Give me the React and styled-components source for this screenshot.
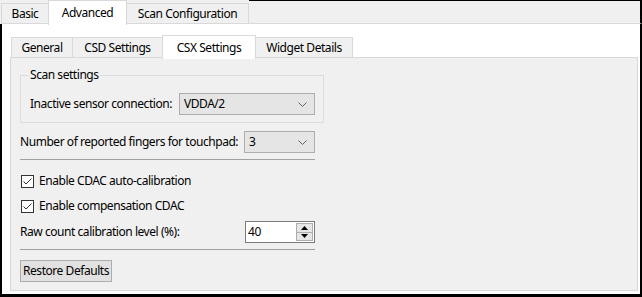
import React from "react";
import styled, { createGlobalStyle } from "styled-components";

const Global = createGlobalStyle`
  html, body { margin: 0; padding: 0; background: #ffffff; }
  body { font-family: "Noto Sans", "Open Sans", sans-serif; font-size: 12px; letter-spacing: -0.45px; color: #000; }
  * { box-sizing: border-box; }
`;

const Window = styled.div`
  width: 642px;
  height: 297px;
  display: flex;
  flex-direction: column;
  background: #f0f0f0;
`;

const TopStrip = styled.div`
  height: 24px;
  display: flex;
  align-items: flex-end;
  background: #f0f0f0;
  padding-left: 1px;
  position: relative;
  z-index: 1;
`;

const Filler = styled.div`
  flex: 1;
  align-self: stretch;
  border-top: 1px solid #000;
  border-right: 2px solid #000;
  border-bottom: 1px solid #d9d9d9;
`;

const Tab = styled.div`
  width: ${(p) => p.$w}px;
  height: ${(p) => (p.$active ? 25 : 21)}px;
  margin-bottom: ${(p) => (p.$active ? -1 : 0)}px;
  display: flex;
  align-items: center;
  justify-content: center;
  background: ${(p) => (p.$active ? "#ffffff" : "#f0f0f0")};
  border: 1px solid #d9d9d9;
  border-bottom: ${(p) => (p.$active ? "none" : "1px solid #d9d9d9")};
  margin-left: -1px;
  white-space: nowrap;
  line-height: 16px;
`;

const OuterPanel = styled.div`
  flex: 1;
  background: #ffffff;
  border-left: 2px solid #000;
  border-right: 2px solid #000;
  border-bottom: 3px solid #000;
  padding: 10px 2px 3px 8px;
  display: flex;
  flex-direction: column;
`;

const InnerStrip = styled.div`
  height: 24px;
  display: flex;
  align-items: flex-end;
  padding-left: 1px;
  position: relative;
  z-index: 1;
`;

const InnerTab = styled(Tab)`
  height: ${(p) => (p.$active ? 24 : 21)}px;
`;

const InnerPanel = styled.div`
  flex: 1;
  margin-top: -1px;
  background: #f0f0f0;
  border: 1px solid #d9d9d9;
  padding: 9px 9px 0 9px;
  display: flex;
  flex-direction: column;
  align-items: flex-start;
`;

const Group = styled.fieldset`
  margin: 0;
  width: 304px;
  border: 1px solid #dcdcdc;
  padding: 0 9px 7px 9px;
  min-width: 0;
`;

const Legend = styled.legend`
  padding: 0 1px;
  margin-left: -1px;
  line-height: 16px;
`;

const Row = styled.div`
  display: flex;
  align-items: center;
  width: ${(p) => p.$w || 295}px;
  margin-top: ${(p) => p.$mt || 0}px;
`;

const Label = styled.span`
  flex: 1;
  white-space: nowrap;
  line-height: 16px;
`;

const Combo = styled.div`
  width: ${(p) => p.$w}px;
  height: 22px;
  background: #e5e5e5;
  border: 1px solid #adadad;
  display: flex;
  align-items: center;
  padding-left: 4px;
  padding-right: 7px;
  line-height: 16px;
`;

const ComboText = styled.span`
  flex: 1;
`;

const Chevron = () => (
  <svg width="9" height="5" viewBox="0 0 9 5">
    <polyline points="0.5,0.5 4.5,4.5 8.5,0.5" fill="none" stroke="#606060" strokeWidth="1" />
  </svg>
);

const Separator = styled.div`
  width: 295px;
  height: 1px;
  background: #a0a0a0;
  margin-top: ${(p) => p.$mt}px;
`;

const CheckRow = styled.label`
  display: flex;
  align-items: center;
  gap: 5px;
  margin-top: ${(p) => p.$mt}px;
  margin-left: 1px;
  line-height: 16px;
`;

const Box = styled.span`
  width: 13px;
  height: 13px;
  border: 1px solid #333333;
  background: #ffffff;
  display: flex;
  align-items: center;
  justify-content: center;
`;

const Check = () => (
  <svg width="11" height="11" viewBox="0 0 11 11">
    <polyline points="1.5,5.5 4,8 9.5,2.5" fill="none" stroke="#333333" strokeWidth="1" />
  </svg>
);

const Spin = styled.div`
  width: 70px;
  height: 22px;
  background: #ffffff;
  border: 1px solid #7a7a7a;
  display: flex;
  align-items: center;
  padding: 1px 1px 1px 2px;
`;

const SpinValue = styled.span`
  flex: 1;
  line-height: 16px;
`;

const SpinButtons = styled.div`
  width: 17px;
  height: 18px;
  display: flex;
  flex-direction: column;
`;

const SpinBtn = styled.div`
  flex: 1;
  background: #e6e6e6;
  border: 1px solid #adadad;
  margin-top: ${(p) => (p.$down ? -1 : 0)}px;
  display: flex;
  align-items: center;
  justify-content: center;
`;

const Tri = ({ up }) => (
  <svg width="7" height="4" viewBox="0 0 7 4">
    <polygon points={up ? "0,4 7,4 3.5,0" : "0,0 7,0 3.5,4"} fill="#000" />
  </svg>
);

const Button = styled.button`
  margin-top: 10px;
  width: 92px;
  height: 22px;
  padding: 0;
  font: inherit;
  letter-spacing: inherit;
  line-height: 16px;
  background: #e1e1e1;
  border: 1px solid #adadad;
  color: #000;
`;

export default function App() {
  return (
    <>
      <Global />
      <Window>
        <TopStrip>
          <Tab $w={48} style={{ marginLeft: 0 }}>Basic</Tab>
          <Tab $active $w={79}>Advanced</Tab>
          <Tab $w={123}>Scan Configuration</Tab>
          <Filler />
        </TopStrip>
        <OuterPanel>
          <InnerStrip>
            <InnerTab $w={62} style={{ marginLeft: 0 }}>General</InnerTab>
            <InnerTab $w={91}>CSD Settings</InnerTab>
            <InnerTab $active $w={94}>CSX Settings</InnerTab>
            <InnerTab $w={98}>Widget Details</InnerTab>
          </InnerStrip>
          <InnerPanel>
            <Group>
              <Legend>Scan settings</Legend>
              <Row $w={285} $mt={10}>
                <Label>Inactive sensor connection:</Label>
                <Combo $w={136}>
                  <ComboText>VDDA/2</ComboText>
                  <Chevron />
                </Combo>
              </Row>
            </Group>
            <Row $mt={8}>
              <Label>Number of reported fingers for touchpad:</Label>
              <Combo $w={71}>
                <ComboText>3</ComboText>
                <Chevron />
              </Combo>
            </Row>
            <Separator $mt={6} />
            <CheckRow $mt={13}>
              <Box><Check /></Box>
              Enable CDAC auto-calibration
            </CheckRow>
            <CheckRow $mt={9}>
              <Box><Check /></Box>
              Enable compensation CDAC
            </CheckRow>
            <Row $mt={7}>
              <Label>Raw count calibration level (%):</Label>
              <Spin>
                <SpinValue>40</SpinValue>
                <SpinButtons>
                  <SpinBtn><Tri up /></SpinBtn>
                  <SpinBtn $down><Tri /></SpinBtn>
                </SpinButtons>
              </Spin>
            </Row>
            <Separator $mt={6} />
            <Button>Restore Defaults</Button>
          </InnerPanel>
        </OuterPanel>
      </Window>
    </>
  );
}
